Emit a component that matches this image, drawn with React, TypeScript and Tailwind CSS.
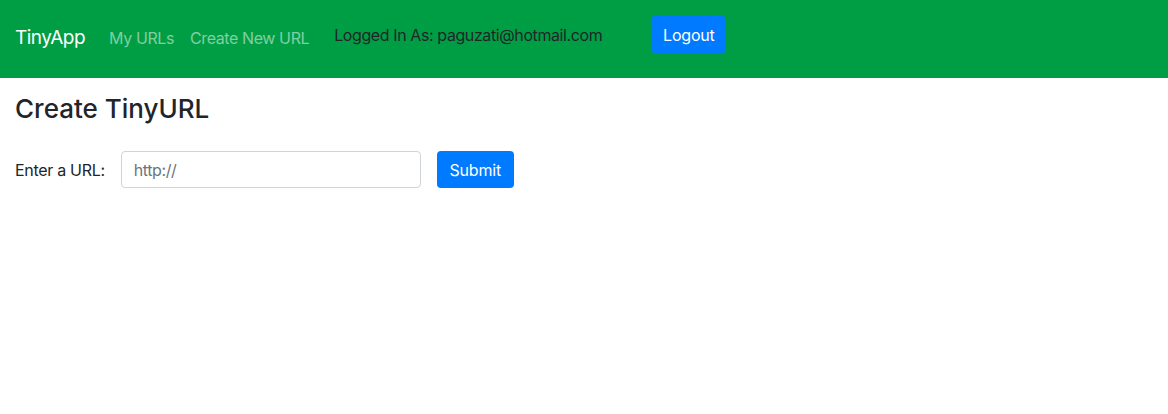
import React from "react";

const App = () => {
  return (
    <div className="min-h-screen bg-white font-['Inter','Liberation_Sans',sans-serif] text-[#212529] tracking-[-0.4px]">
      <nav className="h-[78px] bg-[#009e44] flex items-start pl-[15px]">
        <a className="mt-[23px] text-[19px] leading-[30px] tracking-[-0.5px] text-white">TinyApp</a>
        <div className="ml-[24px] mt-[26px] flex gap-[16px] text-[16px] leading-[24px] text-[#80cfa2]">
          <a>My URLs</a>
          <a>Create New URL</a>
        </div>
        <div className="ml-[25px] mt-[23px] text-[16px] leading-[24px] text-[#212529]">
          Logged In As: paguzati@hotmail.com
        </div>
        <button
          type="button"
          className="ml-[49px] mt-[16px] h-[37px] w-[75px] rounded-[4px] bg-[#007bff] text-[16px] leading-[24px] tracking-[-0.2px] text-white"
        >
          Logout
        </button>
      </nav>
      <main className="px-[15px] pt-[15px]">
        <h3 className="text-[26px] leading-[32px] font-medium tracking-[0px]">Create TinyURL</h3>
        <form className="mt-[26px] flex items-center">
          <label className="text-[16px] leading-[24px] tracking-[-0.3px]">Enter a URL:</label>
          <input
            type="text"
            placeholder="http://"
            className="ml-[16px] h-[37px] w-[300px] rounded-[4px] border border-[#ced4da] px-[12px] text-[16px] text-[#495057] placeholder:text-[#6c757d] outline-none"
          />
          <button
            type="submit"
            className="ml-[16px] h-[37px] w-[77px] rounded-[4px] bg-[#007bff] text-[16px] leading-[24px] tracking-[-0.2px] text-white"
          >
            Submit
          </button>
        </form>
      </main>
    </div>
  );
};

export default App;
